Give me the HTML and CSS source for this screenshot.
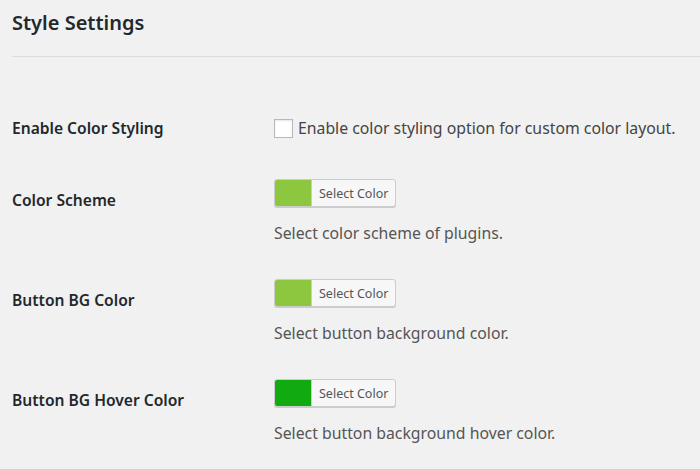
FILE: index.html
```html
<!DOCTYPE html>
<html lang="en">
<head>
<meta charset="utf-8">
<title>Style Settings</title>
<link rel="stylesheet" href="styles.css">
</head>
<body>
<div class="wrap">
  <h2 class="title">Style Settings</h2>
  <hr class="divider">
  <div class="form-table">
    <div class="row row-first">
      <div class="th">Enable Color Styling</div>
      <div class="td">
        <label class="check-label"><span class="checkbox"></span>Enable color styling option for custom color layout.</label>
      </div>
    </div>
    <div class="row">
      <div class="th">Color Scheme</div>
      <div class="td">
        <button class="color-btn"><span class="swatch" style="background:#8dc63f"></span><span class="btn-text">Select Color</span></button>
        <p class="desc">Select color scheme of plugins.</p>
      </div>
    </div>
    <div class="row">
      <div class="th">Button BG Color</div>
      <div class="td">
        <button class="color-btn"><span class="swatch" style="background:#8dc63f"></span><span class="btn-text">Select Color</span></button>
        <p class="desc">Select button background color.</p>
      </div>
    </div>
    <div class="row">
      <div class="th">Button BG Hover Color</div>
      <div class="td">
        <button class="color-btn"><span class="swatch" style="background:#11aa11"></span><span class="btn-text">Select Color</span></button>
        <p class="desc">Select button background hover color.</p>
      </div>
    </div>
  </div>
</div>
</body>
</html>
```
FILE: styles.css
```css
html, body {
  margin: 0;
  padding: 0;
  background: #f1f1f1;
}
body {
  font-family: "Noto Sans", "Open Sans", sans-serif;
  color: #23282d;
  overflow: hidden;
}
.wrap {
  padding-left: 12px;
}
.title {
  margin: 0;
  padding-top: 9px;
  font-size: 20px;
  line-height: 28px;
  font-weight: 600;
  color: #23282d;
}
.divider {
  margin: 19px 0 0 0;
  border: 0;
  border-top: 1px solid #dcdcdc;
  height: 0;
}
.form-table {
  margin-top: 43px;
}
.row {
  display: grid;
  grid-template-columns: 262px 1fr;
}
.th {
  padding-top: 29px;
  font-size: 15.6px;
  line-height: 20px;
  font-weight: 600;
  color: #23282d;
}
.td {
  padding: 18px 0 18px 0;
}
.row-first .th {
  padding-top: 18px;
}
.row-first .td {
  padding-bottom: 23px;
}
.check-label {
  display: flex;
  align-items: center;
  font-size: 15.8px;
  line-height: 20px;
  color: #444;
}
.checkbox {
  width: 17px;
  height: 17px;
  border: 1px solid #b4b9be;
  background: #fff;
  box-shadow: inset 0 1px 2px rgba(0,0,0,0.1);
  margin-right: 5px;
  flex: none;
}
.color-btn {
  display: flex;
  align-items: stretch;
  width: 122px;
  height: 28px;
  padding: 0;
  margin: 0;
  border: 1px solid #ccc;
  border-radius: 3px;
  background: #f7f7f7;
  box-shadow: 0 1px 0 #ccc;
  overflow: hidden;
  font-family: inherit;
  cursor: pointer;
}
.swatch {
  width: 36px;
  flex: none;
  border-right: 1px solid #ccc;
}
.btn-text {
  flex: 1;
  display: flex;
  align-items: center;
  padding-left: 7px;
  font-size: 12.5px;
  color: #555;
}
.desc {
  margin: 16px 0 0 0;
  font-size: 15.8px;
  line-height: 20px;
  color: #555;
}
```
